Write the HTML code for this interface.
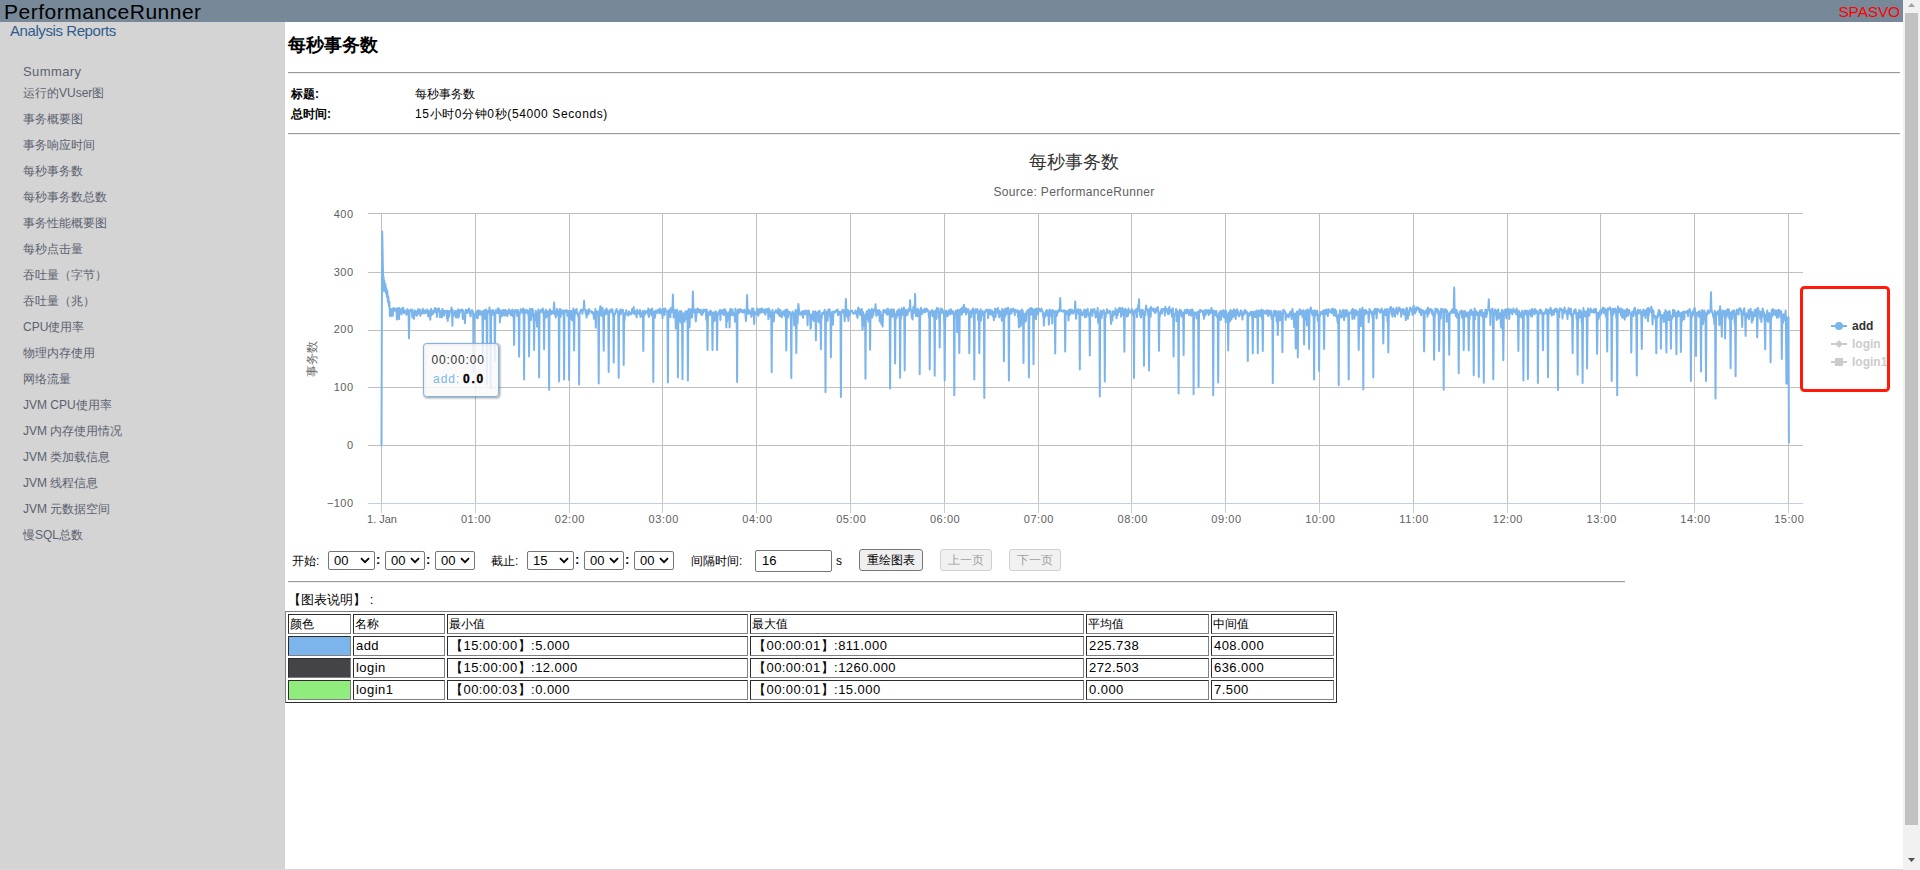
<!DOCTYPE html>
<html lang="zh">
<head>
<meta charset="utf-8">
<title>PerformanceRunner</title>
<style>
*{box-sizing:border-box;}
html,body{margin:0;padding:0;width:1920px;height:870px;overflow:hidden;background:#fff;}
body{font-family:"Liberation Sans",sans-serif;font-size:13px;color:#000;position:relative;}
.abs{position:absolute;white-space:nowrap;}
#hdr{left:0;top:0;width:1903px;height:22px;background:#778899;overflow:hidden;}
#brand{left:4px;top:-1px;font-size:21px;line-height:26px;color:#000;letter-spacing:.5px;}
#spasvo{right:3px;top:2px;font-size:15.4px;letter-spacing:-.1px;line-height:20px;color:#ff0000;}
#side{left:0;top:22px;width:285px;height:848px;background:#d4d4d4;}
#ar{left:10px;top:22px;font-size:15px;line-height:18px;color:#2f5d8c;letter-spacing:-.42px;}
.nav{left:23px;font-size:12px;line-height:16px;color:#5a6270;}
#sb{left:1903px;top:0;width:17px;height:870px;background:#f1f1f1;}
#sbthumb{left:2px;top:13px;width:13px;height:812px;background:#c1c1c1;}
.hr{height:2px;border-top:1px solid #9a9a9a;border-bottom:1px solid #eee;}
#h2{left:288px;top:33px;font-size:18px;line-height:24px;font-weight:bold;}
.lbl{font-size:12px;line-height:16px;font-weight:bold;}
.val{font-size:12px;line-height:16px;}
#chart{left:288px;top:135px;width:1612px;height:400px;}
.frm{font-size:12px;line-height:16px;top:553px;}
.sel{top:551px;height:19px;border:1px solid #767676;border-radius:2px;background:#fff;font-size:13px;line-height:17px;padding-left:5px;}
.col{font-size:13px;font-weight:bold;line-height:16px;top:552px;}
.sel svg{position:absolute;right:4px;top:5px;}
.btn{top:549px;height:22px;border:1px solid #767676;border-radius:3px;background:#efefef;font-size:12px;line-height:20px;text-align:center;}
.btn.dis{border-color:#d0d0d0;color:#a0a0a0;background:#f1f1f1;}
#tbl{left:285px;top:611px;border:1px solid;border-color:#808080 #2c2c2c #2c2c2c #808080;border-spacing:2px;border-collapse:separate;font-size:13px;table-layout:fixed;width:1052px;}
#tbl td{border:1px solid;border-color:#2c2c2c #808080 #808080 #2c2c2c;letter-spacing:.45px;height:20px;padding:0 0 0 2px;line-height:18px;white-space:nowrap;overflow:hidden;vertical-align:top;}
#tbl tr.th td{font-size:12px;letter-spacing:0;padding-left:1px;}
.cj{text-align:justify;text-align-last:justify;}
</style>
</head>
<body>
<div id="hdr" class="abs"><div id="brand" class="abs">PerformanceRunner</div><div id="spasvo" class="abs">SPASVO</div></div>
<div id="side" class="abs"></div>
<div id="ar" class="abs">Analysis Reports</div>
<div class="abs nav" style="top:64px;font-size:13px;letter-spacing:.4px">Summary</div>
<div class="abs cj nav" style="top:85px;width:81.37px">运行的VUser图</div>
<div class="abs cj nav" style="top:111px;width:60.02px">事务概要图</div>
<div class="abs cj nav" style="top:137px;width:72.02px">事务响应时间</div>
<div class="abs cj nav" style="top:163px;width:60.02px">每秒事务数</div>
<div class="abs cj nav" style="top:189px;width:84.02px">每秒事务数总数</div>
<div class="abs cj nav" style="top:215px;width:84.02px">事务性能概要图</div>
<div class="abs cj nav" style="top:241px;width:60.02px">每秒点击量</div>
<div class="abs cj nav" style="top:267px;width:84.02px">吞吐量（字节）</div>
<div class="abs cj nav" style="top:293px;width:72.02px">吞吐量（兆）</div>
<div class="abs cj nav" style="top:319px;width:61.37px">CPU使用率</div>
<div class="abs cj nav" style="top:345px;width:72.02px">物理内存使用</div>
<div class="abs cj nav" style="top:371px;width:48.02px">网络流量</div>
<div class="abs cj nav" style="top:397px;width:88.70px">JVM CPU使用率</div>
<div class="abs cj nav" style="top:423px;width:99.37px">JVM 内存使用情况</div>
<div class="abs cj nav" style="top:449px;width:87.37px">JVM 类加载信息</div>
<div class="abs cj nav" style="top:475px;width:75.37px">JVM 线程信息</div>
<div class="abs cj nav" style="top:501px;width:87.37px">JVM 元数据空间</div>
<div class="abs cj nav" style="top:527px;width:60.04px">慢SQL总数</div>

<div id="h2" class="abs cj" style="top:33px;width:90.02px">每秒事务数</div>
<div class="abs hr" style="left:288px;top:72px;width:1612px"></div>
<div class="abs cj lbl" style="left:291px;top:86px;width:28.02px">标题:</div>
<div class="abs cj val" style="left:415px;top:86px;width:60.02px">每秒事务数</div>
<div class="abs cj lbl" style="left:291px;top:106px;width:40.02px">总时间:</div>
<div class="abs cj val" style="left:415px;top:106px;letter-spacing:.62px;width:193.01px">15小时0分钟0秒(54000 Seconds)</div>
<div class="abs hr" style="left:288px;top:133px;width:1612px"></div>

<svg id="chart" class="abs" width="1612" height="400" viewBox="0 0 1612 400">
<rect x="0" y="0" width="1612" height="400" fill="#ffffff"/>
<path d="M93.5 78.0 V368.0" stroke="#c0c0c0" stroke-width="1" fill="none"/>
<path d="M93.5 368.0 V378.0" stroke="#c0d0e0" stroke-width="1" fill="none"/>
<path d="M187.5 78.0 V368.0" stroke="#c0c0c0" stroke-width="1" fill="none"/>
<path d="M187.5 368.0 V378.0" stroke="#c0d0e0" stroke-width="1" fill="none"/>
<path d="M281.5 78.0 V368.0" stroke="#c0c0c0" stroke-width="1" fill="none"/>
<path d="M281.5 368.0 V378.0" stroke="#c0d0e0" stroke-width="1" fill="none"/>
<path d="M374.5 78.0 V368.0" stroke="#c0c0c0" stroke-width="1" fill="none"/>
<path d="M374.5 368.0 V378.0" stroke="#c0d0e0" stroke-width="1" fill="none"/>
<path d="M468.5 78.0 V368.0" stroke="#c0c0c0" stroke-width="1" fill="none"/>
<path d="M468.5 368.0 V378.0" stroke="#c0d0e0" stroke-width="1" fill="none"/>
<path d="M562.5 78.0 V368.0" stroke="#c0c0c0" stroke-width="1" fill="none"/>
<path d="M562.5 368.0 V378.0" stroke="#c0d0e0" stroke-width="1" fill="none"/>
<path d="M656.5 78.0 V368.0" stroke="#c0c0c0" stroke-width="1" fill="none"/>
<path d="M656.5 368.0 V378.0" stroke="#c0d0e0" stroke-width="1" fill="none"/>
<path d="M750.5 78.0 V368.0" stroke="#c0c0c0" stroke-width="1" fill="none"/>
<path d="M750.5 368.0 V378.0" stroke="#c0d0e0" stroke-width="1" fill="none"/>
<path d="M843.5 78.0 V368.0" stroke="#c0c0c0" stroke-width="1" fill="none"/>
<path d="M843.5 368.0 V378.0" stroke="#c0d0e0" stroke-width="1" fill="none"/>
<path d="M937.5 78.0 V368.0" stroke="#c0c0c0" stroke-width="1" fill="none"/>
<path d="M937.5 368.0 V378.0" stroke="#c0d0e0" stroke-width="1" fill="none"/>
<path d="M1031.5 78.0 V368.0" stroke="#c0c0c0" stroke-width="1" fill="none"/>
<path d="M1031.5 368.0 V378.0" stroke="#c0d0e0" stroke-width="1" fill="none"/>
<path d="M1125.5 78.0 V368.0" stroke="#c0c0c0" stroke-width="1" fill="none"/>
<path d="M1125.5 368.0 V378.0" stroke="#c0d0e0" stroke-width="1" fill="none"/>
<path d="M1219.5 78.0 V368.0" stroke="#c0c0c0" stroke-width="1" fill="none"/>
<path d="M1219.5 368.0 V378.0" stroke="#c0d0e0" stroke-width="1" fill="none"/>
<path d="M1312.5 78.0 V368.0" stroke="#c0c0c0" stroke-width="1" fill="none"/>
<path d="M1312.5 368.0 V378.0" stroke="#c0d0e0" stroke-width="1" fill="none"/>
<path d="M1406.5 78.0 V368.0" stroke="#c0c0c0" stroke-width="1" fill="none"/>
<path d="M1406.5 368.0 V378.0" stroke="#c0d0e0" stroke-width="1" fill="none"/>
<path d="M1500.5 78.0 V368.0" stroke="#c0c0c0" stroke-width="1" fill="none"/>
<path d="M1500.5 368.0 V378.0" stroke="#c0d0e0" stroke-width="1" fill="none"/>
<path d="M80.0 78.5 H1515.0" stroke="#c0c0c0" stroke-width="1" fill="none"/>
<path d="M80.0 137.5 H1515.0" stroke="#c0c0c0" stroke-width="1" fill="none"/>
<path d="M80.0 195.5 H1515.0" stroke="#c0c0c0" stroke-width="1" fill="none"/>
<path d="M80.0 252.5 H1515.0" stroke="#c0c0c0" stroke-width="1" fill="none"/>
<path d="M80.0 310.5 H1515.0" stroke="#c0c0c0" stroke-width="1" fill="none"/>
<path d="M80.0 368.5 H1515.0" stroke="#c0d0e0" stroke-width="1" fill="none"/>
<text x="65.5" y="82.7" text-anchor="end" font-family="Liberation Sans, sans-serif" font-size="11" fill="#606060" letter-spacing="0.45">400</text>
<text x="65.5" y="140.5" text-anchor="end" font-family="Liberation Sans, sans-serif" font-size="11" fill="#606060" letter-spacing="0.45">300</text>
<text x="65.5" y="198.3" text-anchor="end" font-family="Liberation Sans, sans-serif" font-size="11" fill="#606060" letter-spacing="0.45">200</text>
<text x="65.5" y="256.1" text-anchor="end" font-family="Liberation Sans, sans-serif" font-size="11" fill="#606060" letter-spacing="0.45">100</text>
<text x="65.5" y="313.9" text-anchor="end" font-family="Liberation Sans, sans-serif" font-size="11" fill="#606060" letter-spacing="0.45">0</text>
<text x="65.5" y="371.7" text-anchor="end" font-family="Liberation Sans, sans-serif" font-size="11" fill="#606060" letter-spacing="0.45">−100</text>
<text x="94.0" y="388.0" text-anchor="middle" font-family="Liberation Sans, sans-serif" font-size="11" fill="#606060" letter-spacing="0">1. Jan</text>
<text x="188.1" y="388.0" text-anchor="middle" font-family="Liberation Sans, sans-serif" font-size="11" fill="#606060" letter-spacing="0.55">01:00</text>
<text x="281.9" y="388.0" text-anchor="middle" font-family="Liberation Sans, sans-serif" font-size="11" fill="#606060" letter-spacing="0.55">02:00</text>
<text x="375.7" y="388.0" text-anchor="middle" font-family="Liberation Sans, sans-serif" font-size="11" fill="#606060" letter-spacing="0.55">03:00</text>
<text x="469.5" y="388.0" text-anchor="middle" font-family="Liberation Sans, sans-serif" font-size="11" fill="#606060" letter-spacing="0.55">04:00</text>
<text x="563.3" y="388.0" text-anchor="middle" font-family="Liberation Sans, sans-serif" font-size="11" fill="#606060" letter-spacing="0.55">05:00</text>
<text x="657.1" y="388.0" text-anchor="middle" font-family="Liberation Sans, sans-serif" font-size="11" fill="#606060" letter-spacing="0.55">06:00</text>
<text x="750.9" y="388.0" text-anchor="middle" font-family="Liberation Sans, sans-serif" font-size="11" fill="#606060" letter-spacing="0.55">07:00</text>
<text x="844.7" y="388.0" text-anchor="middle" font-family="Liberation Sans, sans-serif" font-size="11" fill="#606060" letter-spacing="0.55">08:00</text>
<text x="938.5" y="388.0" text-anchor="middle" font-family="Liberation Sans, sans-serif" font-size="11" fill="#606060" letter-spacing="0.55">09:00</text>
<text x="1032.3" y="388.0" text-anchor="middle" font-family="Liberation Sans, sans-serif" font-size="11" fill="#606060" letter-spacing="0.55">10:00</text>
<text x="1126.1" y="388.0" text-anchor="middle" font-family="Liberation Sans, sans-serif" font-size="11" fill="#606060" letter-spacing="0.55">11:00</text>
<text x="1219.9" y="388.0" text-anchor="middle" font-family="Liberation Sans, sans-serif" font-size="11" fill="#606060" letter-spacing="0.55">12:00</text>
<text x="1313.7" y="388.0" text-anchor="middle" font-family="Liberation Sans, sans-serif" font-size="11" fill="#606060" letter-spacing="0.55">13:00</text>
<text x="1407.5" y="388.0" text-anchor="middle" font-family="Liberation Sans, sans-serif" font-size="11" fill="#606060" letter-spacing="0.55">14:00</text>
<text x="1501.3" y="388.0" text-anchor="middle" font-family="Liberation Sans, sans-serif" font-size="11" fill="#606060" letter-spacing="0.55">15:00</text>
<text x="28.0" y="223.5" text-anchor="middle" transform="rotate(-90 28.0 223.5)" font-family="Liberation Sans, sans-serif" font-size="12" fill="#707070" textLength="36" lengthAdjust="spacing">事务数</text>
<text x="786.0" y="32.5" text-anchor="middle" font-family="Liberation Sans, sans-serif" font-size="18" fill="#333333" textLength="90" lengthAdjust="spacing">每秒事务数</text>
<text x="786.0" y="60.5" text-anchor="middle" font-family="Liberation Sans, sans-serif" font-size="12" fill="#606060" letter-spacing="0.34">Source: PerformanceRunner</text>
<path d="M93.5 310.5 L93.9 165.0 L94.2 96.5 L94.8 127.0 L95.2 146.0 L95.6 142.0 L96.0 156.0 L96.4 146.0 L96.9 154.0 L97.4 149.0 L97.9 158.0 L98.4 153.0 L98.9 162.0 L99.4 156.0 L99.9 167.0 L100.4 162.0 L100.9 171.0 L101.4 167.0 L101.9 181.0 L102.4 174.0 L103.0 181.0 L103.5 179.5 L103.9 174.0 L104.3 175.4 L104.8 180.8 L105.2 173.4 L105.6 173.0 L106.0 176.0 L106.4 175.5 L106.8 174.4 L107.3 173.7 L107.7 174.3 L108.1 176.5 L108.5 173.7 L108.9 184.5 L109.3 173.3 L109.8 180.2 L110.2 177.2 L110.6 173.3 L111.0 184.1 L111.4 172.9 L111.8 174.5 L112.3 174.9 L112.7 178.5 L113.1 174.4 L113.5 179.4 L113.9 173.5 L114.3 177.0 L114.8 173.6 L115.2 172.8 L115.6 174.9 L116.0 178.4 L116.4 175.4 L116.8 175.5 L117.3 177.3 L117.7 176.3 L118.1 176.3 L118.5 179.8 L118.9 177.2 L119.3 174.2 L119.8 174.5 L120.2 177.9 L120.6 179.4 L121.0 203.3 L121.4 179.1 L121.8 176.0 L122.3 175.1 L122.7 174.9 L123.1 175.0 L123.5 176.1 L123.9 174.4 L124.3 182.4 L124.8 180.1 L125.2 179.0 L125.6 177.0 L126.0 183.8 L126.4 175.2 L126.9 179.3 L127.3 176.1 L127.7 176.2 L128.1 179.9 L128.5 180.6 L128.9 180.4 L129.4 178.0 L129.8 175.5 L130.2 174.2 L130.6 178.4 L131.0 176.5 L131.4 177.9 L131.9 174.5 L132.3 180.7 L132.7 178.9 L133.1 178.9 L133.5 176.5 L133.9 176.1 L134.4 176.4 L134.8 173.7 L135.2 178.6 L135.6 174.9 L136.0 177.5 L136.4 177.0 L136.9 178.4 L137.3 177.0 L137.7 175.3 L138.1 177.8 L138.5 176.8 L138.9 176.5 L139.4 174.4 L139.8 176.9 L140.2 181.5 L140.6 176.6 L141.0 177.6 L141.4 175.9 L141.9 177.5 L142.3 184.7 L142.7 177.4 L143.1 173.7 L143.5 180.2 L143.9 177.8 L144.4 179.1 L144.8 176.1 L145.2 178.7 L145.6 175.6 L146.0 177.4 L146.4 175.5 L146.9 172.9 L147.3 176.9 L147.7 174.6 L148.1 175.8 L148.5 174.0 L148.9 182.0 L149.4 175.0 L149.8 173.8 L150.2 176.3 L150.6 175.2 L151.0 173.4 L151.4 175.6 L151.9 182.3 L152.3 175.9 L152.7 177.5 L153.1 179.2 L153.5 177.9 L153.9 182.3 L154.4 173.9 L154.8 175.2 L155.2 175.2 L155.6 176.9 L156.0 180.7 L156.5 177.3 L156.9 175.7 L157.3 177.7 L157.7 176.8 L158.1 177.7 L158.5 175.9 L159.0 183.4 L159.4 175.8 L159.8 185.9 L160.2 178.6 L160.6 176.0 L161.0 181.8 L161.5 178.6 L161.9 177.4 L162.3 176.1 L162.7 176.2 L163.1 176.1 L163.5 172.4 L164.0 176.6 L164.4 190.7 L164.8 175.0 L165.2 181.1 L165.6 179.2 L166.0 179.2 L166.5 177.7 L166.9 179.6 L167.3 175.7 L167.7 182.2 L168.1 176.1 L168.5 176.8 L169.0 182.6 L169.4 182.2 L169.8 177.2 L170.2 174.3 L170.6 182.4 L171.0 179.8 L171.5 177.7 L171.9 177.5 L172.3 175.3 L172.7 174.8 L173.1 176.4 L173.5 175.5 L174.0 174.5 L174.4 177.3 L174.8 183.9 L175.2 175.5 L175.6 178.4 L176.0 179.8 L176.5 179.6 L176.9 188.3 L177.3 181.1 L177.7 175.2 L178.1 175.0 L178.5 176.6 L179.0 175.0 L179.4 178.1 L179.8 175.0 L180.2 174.7 L180.6 176.7 L181.0 173.5 L181.5 175.5 L181.9 177.3 L182.3 180.9 L182.7 181.4 L183.1 176.2 L183.5 176.6 L184.0 175.1 L184.4 176.8 L184.8 176.1 L185.2 180.4 L185.6 237.6 L186.0 182.8 L186.5 179.4 L186.9 180.4 L187.3 181.4 L187.7 177.7 L188.1 178.8 L188.6 176.8 L189.0 182.9 L189.4 175.4 L189.8 183.3 L190.2 176.4 L190.6 175.5 L191.1 179.4 L191.5 176.2 L191.9 175.9 L192.3 179.7 L192.7 177.4 L193.1 176.9 L193.6 176.5 L194.0 180.1 L194.4 181.3 L194.8 226.0 L195.2 181.9 L195.6 175.5 L196.1 179.9 L196.5 176.6 L196.9 175.3 L197.3 184.2 L197.7 180.8 L198.1 174.6 L198.6 182.1 L199.0 249.3 L199.4 178.3 L199.8 177.0 L200.2 175.8 L200.6 177.6 L201.1 177.1 L201.5 172.4 L201.9 179.3 L202.3 181.8 L202.7 253.6 L203.1 181.3 L203.6 175.5 L204.0 180.2 L204.4 175.4 L204.8 176.3 L205.2 175.1 L205.6 179.2 L206.1 178.0 L206.5 181.2 L206.9 226.0 L207.3 179.8 L207.7 175.3 L208.1 175.7 L208.6 175.8 L209.0 175.4 L209.4 178.0 L209.8 173.2 L210.2 174.9 L210.6 178.0 L211.1 178.6 L211.5 174.3 L211.9 187.4 L212.3 175.8 L212.7 177.9 L213.1 177.9 L213.6 181.4 L214.0 175.8 L214.4 175.4 L214.8 180.3 L215.2 175.7 L215.6 175.0 L216.1 174.9 L216.5 176.0 L216.9 180.6 L217.3 175.1 L217.7 179.6 L218.1 175.6 L218.6 177.1 L219.0 176.4 L219.4 181.2 L219.8 177.9 L220.2 177.1 L220.7 174.7 L221.1 174.4 L221.5 178.4 L221.9 175.7 L222.3 176.4 L222.7 179.4 L223.2 180.4 L223.6 178.8 L224.0 175.3 L224.4 174.6 L224.8 181.2 L225.2 175.6 L225.7 179.6 L226.1 210.1 L226.5 178.6 L226.9 175.9 L227.3 174.9 L227.7 176.1 L228.2 175.8 L228.6 176.3 L229.0 180.7 L229.4 174.9 L229.8 175.0 L230.2 178.7 L230.7 181.2 L231.1 221.8 L231.5 181.0 L231.9 178.3 L232.3 176.1 L232.7 174.2 L233.2 175.7 L233.6 174.6 L234.0 177.2 L234.4 177.0 L234.8 178.5 L235.2 173.4 L235.7 179.1 L236.1 244.6 L236.5 180.7 L236.9 174.7 L237.3 177.8 L237.7 177.1 L238.2 177.8 L238.6 177.6 L239.0 175.0 L239.4 175.6 L239.8 175.6 L240.2 179.3 L240.7 181.6 L241.1 221.5 L241.5 179.4 L241.9 173.8 L242.3 179.8 L242.7 181.1 L243.2 184.9 L243.6 176.5 L244.0 173.8 L244.4 178.5 L244.8 174.3 L245.2 181.5 L245.7 178.9 L246.1 215.0 L246.5 181.0 L246.9 183.1 L247.3 179.1 L247.7 175.8 L248.2 185.4 L248.6 181.2 L249.0 191.6 L249.4 177.3 L249.8 180.5 L250.3 174.6 L250.7 180.5 L251.1 242.4 L251.5 179.6 L251.9 176.8 L252.3 176.9 L252.8 175.0 L253.2 176.8 L253.6 176.7 L254.0 174.6 L254.4 175.8 L254.8 173.5 L255.3 178.9 L255.7 178.0 L256.1 214.2 L256.5 179.3 L256.9 176.8 L257.3 179.6 L257.8 174.4 L258.2 182.4 L258.6 181.3 L259.0 179.5 L259.4 177.1 L259.8 176.4 L260.3 176.1 L260.7 183.2 L261.1 254.8 L261.5 178.7 L261.9 174.2 L262.3 178.6 L262.8 177.0 L263.2 179.2 L263.6 175.9 L264.0 176.8 L264.4 177.7 L264.8 178.5 L265.3 178.0 L265.7 174.0 L266.1 167.5 L266.5 174.0 L266.9 179.6 L267.3 179.6 L267.8 182.4 L268.2 176.5 L268.6 180.2 L269.0 173.8 L269.4 178.0 L269.8 175.4 L270.3 176.8 L270.7 179.9 L271.1 246.4 L271.5 181.5 L271.9 173.9 L272.3 174.3 L272.8 181.7 L273.2 175.5 L273.6 176.5 L274.0 175.4 L274.4 176.0 L274.8 178.8 L275.3 175.6 L275.7 179.4 L276.1 244.6 L276.5 178.5 L276.9 175.4 L277.3 176.8 L277.8 176.4 L278.2 176.3 L278.6 174.9 L279.0 176.5 L279.4 180.8 L279.8 180.5 L280.3 175.9 L280.7 180.7 L281.1 244.9 L281.5 180.7 L281.9 177.8 L282.4 176.0 L282.8 177.5 L283.2 176.0 L283.6 184.8 L284.0 178.0 L284.4 177.7 L284.9 185.8 L285.3 173.4 L285.7 180.4 L286.1 215.4 L286.5 181.6 L286.9 179.2 L287.4 175.1 L287.8 178.7 L288.2 177.2 L288.6 174.0 L289.0 178.6 L289.4 177.7 L289.9 179.1 L290.3 181.7 L290.7 179.8 L291.1 249.6 L291.5 180.0 L291.9 177.4 L292.4 176.4 L292.8 174.7 L293.2 174.8 L293.6 176.3 L294.0 175.4 L294.4 178.8 L294.9 174.4 L295.3 175.1 L295.7 174.0 L296.1 165.8 L296.5 174.0 L296.9 174.2 L297.4 175.7 L297.8 178.9 L298.2 176.9 L298.6 182.6 L299.0 175.3 L299.4 180.1 L299.9 176.5 L300.3 178.1 L300.7 178.9 L301.1 173.9 L301.5 176.2 L301.9 176.2 L302.4 176.4 L302.8 176.3 L303.2 177.0 L303.6 176.3 L304.0 177.8 L304.4 178.5 L304.9 177.3 L305.3 177.4 L305.7 180.6 L306.1 183.8 L306.5 178.7 L306.9 179.0 L307.4 174.1 L307.8 192.8 L308.2 178.0 L308.6 176.5 L309.0 177.8 L309.4 176.6 L309.9 178.3 L310.3 179.8 L310.7 248.5 L311.1 181.4 L311.5 176.0 L311.9 173.6 L312.4 171.2 L312.8 174.1 L313.2 180.8 L313.6 173.8 L314.0 180.3 L314.5 172.7 L314.9 180.2 L315.3 183.3 L315.7 215.7 L316.1 179.0 L316.5 178.1 L317.0 175.0 L317.4 177.6 L317.8 179.6 L318.2 177.9 L318.6 173.5 L319.0 178.6 L319.5 175.3 L319.9 176.6 L320.3 179.5 L320.7 236.9 L321.1 181.3 L321.5 176.8 L322.0 175.1 L322.4 175.6 L322.8 176.6 L323.2 176.9 L323.6 174.3 L324.0 175.3 L324.5 174.6 L324.9 179.6 L325.3 181.0 L325.7 227.4 L326.1 178.7 L326.5 179.5 L327.0 179.4 L327.4 177.5 L327.8 175.5 L328.2 176.6 L328.6 173.9 L329.0 176.3 L329.5 175.8 L329.9 177.9 L330.3 181.3 L330.7 242.7 L331.1 181.9 L331.5 177.4 L332.0 175.6 L332.4 174.6 L332.8 179.2 L333.2 174.8 L333.6 176.5 L334.0 176.0 L334.5 177.3 L334.9 174.7 L335.3 179.3 L335.7 230.0 L336.1 181.2 L336.5 185.4 L337.0 179.1 L337.4 177.6 L337.8 178.3 L338.2 175.3 L338.6 178.8 L339.0 179.6 L339.5 179.3 L339.9 179.3 L340.3 180.6 L340.7 176.3 L341.1 178.5 L341.5 177.4 L342.0 179.3 L342.4 178.9 L342.8 177.7 L343.2 179.4 L343.6 176.7 L344.1 174.1 L344.5 178.1 L344.9 177.6 L345.3 176.3 L345.7 172.0 L346.1 178.8 L346.6 178.9 L347.0 175.9 L347.4 179.3 L347.8 178.0 L348.2 175.9 L348.6 182.5 L349.1 174.7 L349.5 177.4 L349.9 176.1 L350.3 177.7 L350.7 178.7 L351.1 177.3 L351.6 177.6 L352.0 175.0 L352.4 182.0 L352.8 178.5 L353.2 178.4 L353.6 181.3 L354.1 179.7 L354.5 176.0 L354.9 180.8 L355.3 216.1 L355.7 180.5 L356.1 176.1 L356.6 175.7 L357.0 179.6 L357.4 178.1 L357.8 176.8 L358.2 176.7 L358.6 176.1 L359.1 177.3 L359.5 177.7 L359.9 178.9 L360.3 173.4 L360.7 181.1 L361.1 182.0 L361.6 174.8 L362.0 174.8 L362.4 175.0 L362.8 178.3 L363.2 178.4 L363.6 180.2 L364.1 173.4 L364.5 176.6 L364.9 182.0 L365.3 247.1 L365.7 178.0 L366.1 176.4 L366.6 176.4 L367.0 182.8 L367.4 177.4 L367.8 175.6 L368.2 178.2 L368.6 178.2 L369.1 176.0 L369.5 175.2 L369.9 177.3 L370.3 174.6 L370.7 175.6 L371.1 177.0 L371.6 178.4 L372.0 173.6 L372.4 174.4 L372.8 177.2 L373.2 175.0 L373.6 178.2 L374.1 175.4 L374.5 183.2 L374.9 175.0 L375.3 173.8 L375.7 175.4 L376.2 177.1 L376.6 179.9 L377.0 173.4 L377.4 173.8 L377.8 176.3 L378.2 176.3 L378.7 176.1 L379.1 176.8 L379.5 183.3 L379.9 247.5 L380.3 179.3 L380.7 175.3 L381.2 176.6 L381.6 174.8 L382.0 177.0 L382.4 182.2 L382.8 172.9 L383.2 175.6 L383.7 175.5 L384.1 177.0 L384.5 174.0 L384.9 159.5 L385.3 174.0 L385.7 182.4 L386.2 177.2 L386.6 178.3 L387.0 174.9 L387.4 175.4 L387.8 193.4 L388.2 176.2 L388.7 179.6 L389.1 174.8 L389.5 181.3 L389.9 242.3 L390.3 181.4 L390.7 180.4 L391.2 178.7 L391.6 176.2 L392.0 184.6 L392.4 187.4 L392.8 183.0 L393.2 175.9 L393.7 179.4 L394.1 192.0 L394.5 244.2 L394.9 181.0 L395.3 178.2 L395.7 179.9 L396.2 180.4 L396.6 186.8 L397.0 181.6 L397.4 176.4 L397.8 178.8 L398.2 182.6 L398.7 184.6 L399.1 176.0 L399.5 180.9 L399.9 245.6 L400.3 181.3 L400.7 174.0 L401.2 178.0 L401.6 192.2 L402.0 174.6 L402.4 174.7 L402.8 182.7 L403.2 176.0 L403.7 173.9 L404.1 182.4 L404.5 174.0 L404.9 156.6 L405.3 174.0 L405.7 175.8 L406.2 177.5 L406.6 177.3 L407.0 174.5 L407.4 181.8 L407.8 186.5 L408.3 181.7 L408.7 174.6 L409.1 175.5 L409.5 173.4 L409.9 173.8 L410.3 177.4 L410.8 174.7 L411.2 175.1 L411.6 175.9 L412.0 177.5 L412.4 174.7 L412.8 174.8 L413.3 179.6 L413.7 176.0 L414.1 179.9 L414.5 178.2 L414.9 178.5 L415.3 174.5 L415.8 175.7 L416.2 176.1 L416.6 176.3 L417.0 174.8 L417.4 176.7 L417.8 177.0 L418.3 184.8 L418.7 174.4 L419.1 181.5 L419.5 215.0 L419.9 183.3 L420.3 177.5 L420.8 178.3 L421.2 176.9 L421.6 179.6 L422.0 180.0 L422.4 175.5 L422.8 178.4 L423.3 176.5 L423.7 177.4 L424.1 181.7 L424.5 215.0 L424.9 181.4 L425.3 179.7 L425.8 177.2 L426.2 180.6 L426.6 185.9 L427.0 182.9 L427.4 180.7 L427.8 176.2 L428.3 180.0 L428.7 178.7 L429.1 215.0 L429.5 181.5 L429.9 179.4 L430.3 177.7 L430.8 176.7 L431.2 178.4 L431.6 176.3 L432.0 174.7 L432.4 185.0 L432.8 175.8 L433.3 176.8 L433.7 176.6 L434.1 175.4 L434.5 178.7 L434.9 179.0 L435.3 174.8 L435.8 179.8 L436.2 180.1 L436.6 175.3 L437.0 174.2 L437.4 177.7 L437.9 175.9 L438.3 192.5 L438.7 180.2 L439.1 186.5 L439.5 181.8 L439.9 178.6 L440.4 177.4 L440.8 181.2 L441.2 177.7 L441.6 192.6 L442.0 175.9 L442.4 174.0 L442.9 175.6 L443.3 180.2 L443.7 174.5 L444.1 175.9 L444.5 174.8 L444.9 178.5 L445.4 180.1 L445.8 178.3 L446.2 179.7 L446.6 178.4 L447.0 186.8 L447.4 173.8 L447.9 178.3 L448.3 184.4 L448.7 182.2 L449.1 247.1 L449.5 178.3 L449.9 174.5 L450.4 178.3 L450.8 178.0 L451.2 177.6 L451.6 175.3 L452.0 174.0 L452.4 176.0 L452.9 176.7 L453.3 174.9 L453.7 174.8 L454.1 176.5 L454.5 177.1 L454.9 176.6 L455.4 177.5 L455.8 176.5 L456.2 174.8 L456.6 176.7 L457.0 175.5 L457.4 178.6 L457.9 186.0 L458.3 181.5 L458.7 173.0 L459.1 159.9 L459.5 174.0 L459.9 174.4 L460.4 178.7 L460.8 175.3 L461.2 177.2 L461.6 175.5 L462.0 178.7 L462.4 178.2 L462.9 177.4 L463.3 181.8 L463.7 180.0 L464.1 173.6 L464.5 176.8 L464.9 174.7 L465.4 173.6 L465.8 181.2 L466.2 189.0 L466.6 179.7 L467.0 177.1 L467.4 178.2 L467.9 178.0 L468.3 179.2 L468.7 179.4 L469.1 174.7 L469.5 173.6 L470.0 176.4 L470.4 180.8 L470.8 175.1 L471.2 178.1 L471.6 174.3 L472.0 178.0 L472.5 174.0 L472.9 174.0 L473.3 177.4 L473.7 176.8 L474.1 173.5 L474.5 176.4 L475.0 174.7 L475.4 177.3 L475.8 175.6 L476.2 175.3 L476.6 178.5 L477.0 174.2 L477.5 179.8 L477.9 174.4 L478.3 176.6 L478.7 177.0 L479.1 174.4 L479.5 174.0 L480.0 174.8 L480.4 184.1 L480.8 173.6 L481.2 181.6 L481.6 175.4 L482.0 175.9 L482.5 178.4 L482.9 179.3 L483.3 185.4 L483.7 237.3 L484.1 178.1 L484.5 174.8 L485.0 179.8 L485.4 180.6 L485.8 186.5 L486.2 179.4 L486.6 177.3 L487.0 176.7 L487.5 176.7 L487.9 175.3 L488.3 177.1 L488.7 177.5 L489.1 176.1 L489.5 178.5 L490.0 175.2 L490.4 173.6 L490.8 177.7 L491.2 180.4 L491.6 176.8 L492.0 181.1 L492.5 174.9 L492.9 180.5 L493.3 177.5 L493.7 182.2 L494.1 180.5 L494.5 177.9 L495.0 177.1 L495.4 176.2 L495.8 176.5 L496.2 179.9 L496.6 176.0 L497.0 181.3 L497.5 174.8 L497.9 181.7 L498.3 215.4 L498.7 179.1 L499.1 174.4 L499.5 181.0 L500.0 182.5 L500.4 176.4 L500.8 177.4 L501.2 179.3 L501.6 178.7 L502.1 177.1 L502.5 179.7 L502.9 184.4 L503.3 243.0 L503.7 179.9 L504.1 179.2 L504.6 176.6 L505.0 178.4 L505.4 178.0 L505.8 180.0 L506.2 190.5 L506.6 182.8 L507.1 181.1 L507.5 174.9 L507.9 179.9 L508.3 217.9 L508.7 180.0 L509.1 175.2 L509.6 188.5 L510.0 174.0 L510.4 169.0 L510.8 174.0 L511.2 176.9 L511.6 179.4 L512.1 177.4 L512.5 178.0 L512.9 179.8 L513.3 177.4 L513.7 178.5 L514.1 176.2 L514.6 178.1 L515.0 182.7 L515.4 177.4 L515.8 177.0 L516.2 175.9 L516.6 178.7 L517.1 179.4 L517.5 175.5 L517.9 175.6 L518.3 177.5 L518.7 176.6 L519.1 177.1 L519.6 190.2 L520.0 175.6 L520.4 179.4 L520.8 175.8 L521.2 177.5 L521.6 179.1 L522.1 180.9 L522.5 193.8 L522.9 192.6 L523.3 182.7 L523.7 179.6 L524.1 179.4 L524.6 184.0 L525.0 176.4 L525.4 182.2 L525.8 185.9 L526.2 178.6 L526.6 179.0 L527.1 176.3 L527.5 181.5 L527.9 205.2 L528.3 179.3 L528.7 182.3 L529.1 177.5 L529.6 180.4 L530.0 176.5 L530.4 186.8 L530.8 178.6 L531.2 182.1 L531.7 175.8 L532.1 188.4 L532.5 181.1 L532.9 214.2 L533.3 181.6 L533.7 183.1 L534.2 177.7 L534.6 178.0 L535.0 179.1 L535.4 179.0 L535.8 177.4 L536.2 176.3 L536.7 174.8 L537.1 181.0 L537.5 257.3 L537.9 180.9 L538.3 179.5 L538.7 176.7 L539.2 177.5 L539.6 185.7 L540.0 176.7 L540.4 174.4 L540.8 176.2 L541.2 177.4 L541.7 174.5 L542.1 182.5 L542.5 181.2 L542.9 222.3 L543.3 179.7 L543.7 178.2 L544.2 176.7 L544.6 178.3 L545.0 189.7 L545.4 177.3 L545.8 176.6 L546.2 177.5 L546.7 176.6 L547.1 177.5 L547.5 176.1 L547.9 176.4 L548.3 175.8 L548.7 175.0 L549.2 175.8 L549.6 174.5 L550.0 180.3 L550.4 178.6 L550.8 177.8 L551.2 176.7 L551.7 179.3 L552.1 177.0 L552.5 179.4 L552.9 262.1 L553.3 180.1 L553.7 176.7 L554.2 175.7 L554.6 174.7 L555.0 177.6 L555.4 175.3 L555.8 176.6 L556.2 178.7 L556.7 186.3 L557.1 178.0 L557.5 174.0 L557.9 163.9 L558.3 174.0 L558.7 180.7 L559.2 178.0 L559.6 182.5 L560.0 175.0 L560.4 186.0 L560.8 176.4 L561.2 176.4 L561.7 180.4 L562.1 177.7 L562.5 175.7 L562.9 175.6 L563.3 176.6 L563.8 176.8 L564.2 175.7 L564.6 176.9 L565.0 178.1 L565.4 178.8 L565.8 177.9 L566.3 177.8 L566.7 178.2 L567.1 178.5 L567.5 175.5 L567.9 176.7 L568.3 176.3 L568.8 180.8 L569.2 178.4 L569.6 182.9 L570.0 174.3 L570.4 172.5 L570.8 174.8 L571.3 176.8 L571.7 174.6 L572.1 180.0 L572.5 176.2 L572.9 177.7 L573.3 178.7 L573.8 174.0 L574.2 188.2 L574.6 194.8 L575.0 176.9 L575.4 178.2 L575.8 190.8 L576.3 181.4 L576.7 180.8 L577.1 181.6 L577.5 243.7 L577.9 178.8 L578.3 184.2 L578.8 176.2 L579.2 176.2 L579.6 178.1 L580.0 178.1 L580.4 186.6 L580.8 174.4 L581.3 175.9 L581.7 180.8 L582.1 214.7 L582.5 179.9 L582.9 175.8 L583.3 174.6 L583.8 173.9 L584.2 182.6 L584.6 174.2 L585.0 175.4 L585.4 180.0 L585.8 174.9 L586.3 175.9 L586.7 174.9 L587.1 174.0 L587.5 169.3 L587.9 174.0 L588.3 181.0 L588.8 179.7 L589.2 179.6 L589.6 175.6 L590.0 177.2 L590.4 175.3 L590.8 179.7 L591.3 175.2 L591.7 186.5 L592.1 177.4 L592.5 176.7 L592.9 180.4 L593.3 188.9 L593.8 180.0 L594.2 181.7 L594.6 191.6 L595.0 179.7 L595.4 175.0 L595.9 177.7 L596.3 175.8 L596.7 175.1 L597.1 176.0 L597.5 176.6 L597.9 177.7 L598.4 176.1 L598.8 179.7 L599.2 173.8 L599.6 176.3 L600.0 179.2 L600.4 174.1 L600.9 179.0 L601.3 175.6 L601.7 179.8 L602.1 253.4 L602.5 184.4 L602.9 174.6 L603.4 174.5 L603.8 174.5 L604.2 176.9 L604.6 181.9 L605.0 179.8 L605.4 174.7 L605.9 174.5 L606.3 178.5 L606.7 178.8 L607.1 228.5 L607.5 179.3 L607.9 179.1 L608.4 183.2 L608.8 177.5 L609.2 176.0 L609.6 176.9 L610.0 180.5 L610.4 174.8 L610.9 177.8 L611.3 174.2 L611.7 178.9 L612.1 242.7 L612.5 180.5 L612.9 183.5 L613.4 176.3 L613.8 173.6 L614.2 175.5 L614.6 174.0 L615.0 179.9 L615.4 177.0 L615.9 172.6 L616.3 180.3 L616.7 235.4 L617.1 180.9 L617.5 176.5 L617.9 174.7 L618.4 176.0 L618.8 180.3 L619.2 176.4 L619.6 179.3 L620.0 177.4 L620.4 174.0 L620.9 176.6 L621.3 175.0 L621.7 174.0 L622.1 165.3 L622.5 174.0 L622.9 174.8 L623.4 176.1 L623.8 182.8 L624.2 176.1 L624.6 184.4 L625.0 175.2 L625.5 171.7 L625.9 177.9 L626.3 177.8 L626.7 174.0 L627.1 158.8 L627.5 174.0 L628.0 181.0 L628.4 178.7 L628.8 177.3 L629.2 174.3 L629.6 181.0 L630.0 174.0 L630.5 174.8 L630.9 177.2 L631.3 181.0 L631.7 239.3 L632.1 181.9 L632.5 175.8 L633.0 172.8 L633.4 176.6 L633.8 179.3 L634.2 177.2 L634.6 177.2 L635.0 175.1 L635.5 176.7 L635.9 175.1 L636.3 177.6 L636.7 173.8 L637.1 175.0 L637.5 174.1 L638.0 176.8 L638.4 173.4 L638.8 175.5 L639.2 174.4 L639.6 176.1 L640.0 175.9 L640.5 175.5 L640.9 182.2 L641.3 180.1 L641.7 234.4 L642.1 180.5 L642.5 177.5 L643.0 176.0 L643.4 176.0 L643.8 175.2 L644.2 175.1 L644.6 181.2 L645.0 180.7 L645.5 178.3 L645.9 176.3 L646.3 180.4 L646.7 240.8 L647.1 179.9 L647.5 175.4 L648.0 176.0 L648.4 183.9 L648.8 172.9 L649.2 175.8 L649.6 176.7 L650.0 175.2 L650.5 173.6 L650.9 182.7 L651.3 179.4 L651.7 212.5 L652.1 179.9 L652.5 178.7 L653.0 173.6 L653.4 173.9 L653.8 177.8 L654.2 175.5 L654.6 174.6 L655.0 177.8 L655.5 178.2 L655.9 177.0 L656.3 189.9 L656.7 245.6 L657.1 186.5 L657.6 180.8 L658.0 175.5 L658.4 177.3 L658.8 176.6 L659.2 177.1 L659.6 181.3 L660.1 179.8 L660.5 176.8 L660.9 175.3 L661.3 175.1 L661.7 176.4 L662.1 179.4 L662.6 177.4 L663.0 174.2 L663.4 175.9 L663.8 178.6 L664.2 177.3 L664.6 176.3 L665.1 176.7 L665.5 179.3 L665.9 180.4 L666.3 260.2 L666.7 180.2 L667.1 179.5 L667.6 175.8 L668.0 176.2 L668.4 176.2 L668.8 178.9 L669.2 197.2 L669.6 174.7 L670.1 177.3 L670.5 175.2 L670.9 180.7 L671.3 217.9 L671.7 181.9 L672.1 174.9 L672.6 174.0 L673.0 177.9 L673.4 176.5 L673.8 179.7 L674.2 172.6 L674.6 176.6 L675.1 177.2 L675.5 174.0 L675.9 169.7 L676.3 174.0 L676.7 176.9 L677.1 172.9 L677.6 175.4 L678.0 179.4 L678.4 173.8 L678.8 177.7 L679.2 176.2 L679.6 176.1 L680.1 174.1 L680.5 174.5 L680.9 180.3 L681.3 218.3 L681.7 182.0 L682.1 177.3 L682.6 181.2 L683.0 175.6 L683.4 182.0 L683.8 178.1 L684.2 175.9 L684.6 175.1 L685.1 173.5 L685.5 177.0 L685.9 179.3 L686.3 244.6 L686.7 180.4 L687.1 175.8 L687.6 174.3 L688.0 177.9 L688.4 175.5 L688.8 174.6 L689.2 174.0 L689.7 175.3 L690.1 185.0 L690.5 176.4 L690.9 180.3 L691.3 218.3 L691.7 179.8 L692.2 175.1 L692.6 174.4 L693.0 185.4 L693.4 177.2 L693.8 178.9 L694.2 180.4 L694.7 175.9 L695.1 179.0 L695.5 178.3 L695.9 182.7 L696.3 263.1 L696.7 178.9 L697.2 175.9 L697.6 175.4 L698.0 176.6 L698.4 174.4 L698.8 174.5 L699.2 175.6 L699.7 176.0 L700.1 183.2 L700.5 180.2 L700.9 174.8 L701.3 177.9 L701.7 174.7 L702.2 178.9 L702.6 179.4 L703.0 175.7 L703.4 177.0 L703.8 175.2 L704.2 177.7 L704.7 181.0 L705.1 177.0 L705.5 179.6 L705.9 185.3 L706.3 177.4 L706.7 175.9 L707.2 173.4 L707.6 181.9 L708.0 174.3 L708.4 175.7 L708.8 177.8 L709.2 175.1 L709.7 173.8 L710.1 173.1 L710.5 178.5 L710.9 181.2 L711.3 182.3 L711.7 176.1 L712.2 177.9 L712.6 180.2 L713.0 177.1 L713.4 178.4 L713.8 185.6 L714.2 173.9 L714.7 174.5 L715.1 175.2 L715.5 181.9 L715.9 226.2 L716.3 178.3 L716.7 182.3 L717.2 173.7 L717.6 180.5 L718.0 175.1 L718.4 174.4 L718.8 173.5 L719.3 178.5 L719.7 173.1 L720.1 172.7 L720.5 181.2 L720.9 245.6 L721.3 179.9 L721.8 176.7 L722.2 179.0 L722.6 173.9 L723.0 177.3 L723.4 178.6 L723.8 176.8 L724.3 174.5 L724.7 176.0 L725.1 173.6 L725.5 174.7 L725.9 175.5 L726.3 176.5 L726.8 180.2 L727.2 174.7 L727.6 176.8 L728.0 177.0 L728.4 175.9 L728.8 176.7 L729.3 175.2 L729.7 175.4 L730.1 182.3 L730.5 179.4 L730.9 192.6 L731.3 179.2 L731.8 176.0 L732.2 178.5 L732.6 191.3 L733.0 179.7 L733.4 188.9 L733.8 174.4 L734.3 188.2 L734.7 175.5 L735.1 181.8 L735.5 228.1 L735.9 179.3 L736.3 187.4 L736.8 185.2 L737.2 178.7 L737.6 186.4 L738.0 185.6 L738.4 176.9 L738.8 176.6 L739.3 177.1 L739.7 177.1 L740.1 174.7 L740.5 180.3 L740.9 242.4 L741.3 187.0 L741.8 175.5 L742.2 173.3 L742.6 178.7 L743.0 178.3 L743.4 179.6 L743.8 173.1 L744.3 175.4 L744.7 174.6 L745.1 180.6 L745.5 229.3 L745.9 180.2 L746.3 174.6 L746.8 178.9 L747.2 178.7 L747.6 174.0 L748.0 184.1 L748.4 173.8 L748.8 176.5 L749.3 175.3 L749.7 173.4 L750.1 179.4 L750.5 174.8 L750.9 174.5 L751.4 173.9 L751.8 174.6 L752.2 174.9 L752.6 176.5 L753.0 175.6 L753.4 173.6 L753.9 175.2 L754.3 176.5 L754.7 176.1 L755.1 181.7 L755.5 180.1 L755.9 190.6 L756.4 178.4 L756.8 182.3 L757.2 177.8 L757.6 177.9 L758.0 176.3 L758.4 175.2 L758.9 180.4 L759.3 178.7 L759.7 175.6 L760.1 180.1 L760.5 180.1 L760.9 189.6 L761.4 180.4 L761.8 174.6 L762.2 175.2 L762.6 180.8 L763.0 176.4 L763.4 177.5 L763.9 175.5 L764.3 188.4 L764.7 174.9 L765.1 177.3 L765.5 175.9 L765.9 175.9 L766.4 176.7 L766.8 178.1 L767.2 218.6 L767.6 180.6 L768.0 176.1 L768.4 176.9 L768.9 181.0 L769.3 177.4 L769.7 177.2 L770.1 175.4 L770.5 177.1 L770.9 174.8 L771.4 176.0 L771.8 174.0 L772.2 163.1 L772.6 174.0 L773.0 175.6 L773.4 176.2 L773.9 176.5 L774.3 176.3 L774.7 175.7 L775.1 176.5 L775.5 175.4 L775.9 175.5 L776.4 175.2 L776.8 178.0 L777.2 216.4 L777.6 180.1 L778.0 175.9 L778.4 177.5 L778.9 176.5 L779.3 179.2 L779.7 176.3 L780.1 178.3 L780.5 185.4 L780.9 175.0 L781.4 179.8 L781.8 175.0 L782.2 179.6 L782.6 174.5 L783.0 178.4 L783.5 175.9 L783.9 174.8 L784.3 178.0 L784.7 175.8 L785.1 178.6 L785.5 178.1 L786.0 175.9 L786.4 176.8 L786.8 174.0 L787.2 166.4 L787.6 174.0 L788.0 183.8 L788.5 177.7 L788.9 176.7 L789.3 175.1 L789.7 178.2 L790.1 175.7 L790.5 174.2 L791.0 179.4 L791.4 179.1 L791.8 234.4 L792.2 181.0 L792.6 174.8 L793.0 177.2 L793.5 177.2 L793.9 178.3 L794.3 180.4 L794.7 177.6 L795.1 177.4 L795.5 178.8 L796.0 175.5 L796.4 174.6 L796.8 182.2 L797.2 177.9 L797.6 181.0 L798.0 175.2 L798.5 181.8 L798.9 176.4 L799.3 175.2 L799.7 173.8 L800.1 179.2 L800.5 177.3 L801.0 181.4 L801.4 179.3 L801.8 220.4 L802.2 178.2 L802.6 179.2 L803.0 174.4 L803.5 179.2 L803.9 174.5 L804.3 180.8 L804.7 177.0 L805.1 176.9 L805.5 175.3 L806.0 174.1 L806.4 174.0 L806.8 177.7 L807.2 178.2 L807.6 182.4 L808.0 179.1 L808.5 176.6 L808.9 181.8 L809.3 179.7 L809.7 173.1 L810.1 187.8 L810.5 178.7 L811.0 181.3 L811.4 178.6 L811.8 261.4 L812.2 181.2 L812.6 175.4 L813.1 181.5 L813.5 183.1 L813.9 180.6 L814.3 176.5 L814.7 177.1 L815.1 176.7 L815.6 175.0 L816.0 176.6 L816.4 180.6 L816.8 246.4 L817.2 180.8 L817.6 182.5 L818.1 177.8 L818.5 178.1 L818.9 174.3 L819.3 175.2 L819.7 178.0 L820.1 175.9 L820.6 177.8 L821.0 177.1 L821.4 177.3 L821.8 175.9 L822.2 176.0 L822.6 181.3 L823.1 189.0 L823.5 181.8 L823.9 180.1 L824.3 185.6 L824.7 176.2 L825.1 177.8 L825.6 180.7 L826.0 176.4 L826.4 178.7 L826.8 177.7 L827.2 179.0 L827.6 173.5 L828.1 177.7 L828.5 183.2 L828.9 175.9 L829.3 177.1 L829.7 180.2 L830.1 174.6 L830.6 177.1 L831.0 173.5 L831.4 176.7 L831.8 172.7 L832.2 176.3 L832.6 174.6 L833.1 181.8 L833.5 173.4 L833.9 179.9 L834.3 173.1 L834.7 174.6 L835.1 179.5 L835.6 175.0 L836.0 180.2 L836.4 216.7 L836.8 178.2 L837.2 173.7 L837.6 177.5 L838.1 178.7 L838.5 174.9 L838.9 181.6 L839.3 181.3 L839.7 176.1 L840.1 180.6 L840.6 173.6 L841.0 176.8 L841.4 176.5 L841.8 177.2 L842.2 176.3 L842.6 177.9 L843.1 175.7 L843.5 175.5 L843.9 174.1 L844.3 175.3 L844.7 175.5 L845.2 181.0 L845.6 180.7 L846.0 243.1 L846.4 179.4 L846.8 175.9 L847.2 175.2 L847.7 177.3 L848.1 175.1 L848.5 173.7 L848.9 182.1 L849.3 177.0 L849.7 176.1 L850.2 170.1 L850.6 174.0 L851.0 164.3 L851.4 174.0 L851.8 176.1 L852.2 181.0 L852.7 176.3 L853.1 182.6 L853.5 175.0 L853.9 178.6 L854.3 175.6 L854.7 174.9 L855.2 179.3 L855.6 180.4 L856.0 230.7 L856.4 178.7 L856.8 176.6 L857.2 180.3 L857.7 173.9 L858.1 170.5 L858.5 174.0 L858.9 173.9 L859.3 175.4 L859.7 174.4 L860.2 180.4 L860.6 179.6 L861.0 235.4 L861.4 179.0 L861.8 173.9 L862.2 173.3 L862.7 181.8 L863.1 171.9 L863.5 173.9 L863.9 173.8 L864.3 174.7 L864.7 174.0 L865.2 175.9 L865.6 173.4 L866.0 176.1 L866.4 174.7 L866.8 177.8 L867.2 174.6 L867.7 177.7 L868.1 173.9 L868.5 173.2 L868.9 175.8 L869.3 175.9 L869.7 172.1 L870.2 175.0 L870.6 180.7 L871.0 215.7 L871.4 181.8 L871.8 181.7 L872.2 177.2 L872.7 177.7 L873.1 176.1 L873.5 174.1 L873.9 178.7 L874.3 176.0 L874.7 174.5 L875.2 174.0 L875.6 174.3 L876.0 174.6 L876.4 173.7 L876.8 180.5 L877.3 171.8 L877.7 176.7 L878.1 174.6 L878.5 174.0 L878.9 175.9 L879.3 174.8 L879.8 178.5 L880.2 179.2 L880.6 173.5 L881.0 179.0 L881.4 171.8 L881.8 174.3 L882.3 176.8 L882.7 175.6 L883.1 175.5 L883.5 174.9 L883.9 181.5 L884.3 176.9 L884.8 173.2 L885.2 179.5 L885.6 221.5 L886.0 180.0 L886.4 179.5 L886.8 179.3 L887.3 179.5 L887.7 177.6 L888.1 173.9 L888.5 186.2 L888.9 175.9 L889.3 175.9 L889.8 179.5 L890.2 180.5 L890.6 258.5 L891.0 181.1 L891.4 177.4 L891.8 174.7 L892.3 179.5 L892.7 175.2 L893.1 175.6 L893.5 181.6 L893.9 178.0 L894.3 177.5 L894.8 177.8 L895.2 179.4 L895.6 220.1 L896.0 179.1 L896.4 177.0 L896.8 175.0 L897.3 176.5 L897.7 176.0 L898.1 178.6 L898.5 177.8 L898.9 174.6 L899.3 176.9 L899.8 174.8 L900.2 178.1 L900.6 175.6 L901.0 180.1 L901.4 178.6 L901.8 178.7 L902.3 175.9 L902.7 174.7 L903.1 180.7 L903.5 177.5 L903.9 177.3 L904.3 174.6 L904.8 175.8 L905.2 180.6 L905.6 259.2 L906.0 179.2 L906.4 177.4 L906.9 177.9 L907.3 179.2 L907.7 177.5 L908.1 177.8 L908.5 183.3 L908.9 177.6 L909.4 177.7 L909.8 176.8 L910.2 181.2 L910.6 252.2 L911.0 180.5 L911.4 175.3 L911.9 175.9 L912.3 177.2 L912.7 175.1 L913.1 175.3 L913.5 175.7 L913.9 176.0 L914.4 175.9 L914.8 176.4 L915.2 180.2 L915.6 179.6 L916.0 183.8 L916.4 175.6 L916.9 175.6 L917.3 180.4 L917.7 174.9 L918.1 178.8 L918.5 176.3 L918.9 175.6 L919.4 177.2 L919.8 178.1 L920.2 175.0 L920.6 179.9 L921.0 179.7 L921.4 175.6 L921.9 178.3 L922.3 175.5 L922.7 177.3 L923.1 177.8 L923.5 172.9 L923.9 175.6 L924.4 177.4 L924.8 180.2 L925.2 260.2 L925.6 181.9 L926.0 175.4 L926.4 180.6 L926.9 177.1 L927.3 177.3 L927.7 180.3 L928.1 175.9 L928.5 176.4 L928.9 181.9 L929.4 182.4 L929.8 180.9 L930.2 247.5 L930.6 181.5 L931.0 178.5 L931.4 177.6 L931.9 184.5 L932.3 175.9 L932.7 185.0 L933.1 183.4 L933.5 177.4 L933.9 179.6 L934.4 176.0 L934.8 175.6 L935.2 175.4 L935.6 182.2 L936.0 175.5 L936.4 176.8 L936.9 177.3 L937.3 182.1 L937.7 187.4 L938.1 175.8 L938.5 178.8 L939.0 178.9 L939.4 179.1 L939.8 179.6 L940.2 215.4 L940.6 181.6 L941.0 177.5 L941.5 180.6 L941.9 186.4 L942.3 175.1 L942.7 175.2 L943.1 182.0 L943.5 184.4 L944.0 177.3 L944.4 175.9 L944.8 177.1 L945.2 181.8 L945.6 177.4 L946.0 174.3 L946.5 179.2 L946.9 181.1 L947.3 178.0 L947.7 183.9 L948.1 175.4 L948.5 178.5 L949.0 174.2 L949.4 179.8 L949.8 175.8 L950.2 178.9 L950.6 178.9 L951.0 181.4 L951.5 178.7 L951.9 178.0 L952.3 179.8 L952.7 175.4 L953.1 176.5 L953.5 175.6 L954.0 179.1 L954.4 184.5 L954.8 178.8 L955.2 179.5 L955.6 179.8 L956.0 176.5 L956.5 179.0 L956.9 174.9 L957.3 176.6 L957.7 175.5 L958.1 177.0 L958.5 178.1 L959.0 177.0 L959.4 181.4 L959.8 225.9 L960.2 178.5 L960.6 179.1 L961.0 178.4 L961.5 180.7 L961.9 178.0 L962.3 180.0 L962.7 176.8 L963.1 176.9 L963.5 177.1 L964.0 176.6 L964.4 185.8 L964.8 218.6 L965.2 178.9 L965.6 177.2 L966.0 180.8 L966.5 176.5 L966.9 181.8 L967.3 179.3 L967.7 182.0 L968.1 178.9 L968.5 175.5 L969.0 181.6 L969.4 181.1 L969.8 218.3 L970.2 180.8 L970.6 175.6 L971.1 178.4 L971.5 178.3 L971.9 175.7 L972.3 181.0 L972.7 178.5 L973.1 177.0 L973.6 174.4 L974.0 183.8 L974.4 180.8 L974.8 216.0 L975.2 181.2 L975.6 175.6 L976.1 177.8 L976.5 176.6 L976.9 177.1 L977.3 178.6 L977.7 178.5 L978.1 175.5 L978.6 177.8 L979.0 176.0 L979.4 179.1 L979.8 175.3 L980.2 181.1 L980.6 177.0 L981.1 175.9 L981.5 178.8 L981.9 179.0 L982.3 179.8 L982.7 175.5 L983.1 178.2 L983.6 183.7 L984.0 180.3 L984.4 181.5 L984.8 248.1 L985.2 181.3 L985.6 176.3 L986.1 178.6 L986.5 175.7 L986.9 180.8 L987.3 179.5 L987.7 177.6 L988.1 176.0 L988.6 186.5 L989.0 176.9 L989.4 179.4 L989.8 199.9 L990.2 181.3 L990.6 176.3 L991.1 177.2 L991.5 182.8 L991.9 185.6 L992.3 176.3 L992.7 176.4 L993.1 182.7 L993.6 184.3 L994.0 179.0 L994.4 217.2 L994.8 181.7 L995.2 175.1 L995.6 174.8 L996.1 177.4 L996.5 175.8 L996.9 176.6 L997.3 178.9 L997.7 184.9 L998.1 178.4 L998.6 181.7 L999.0 180.6 L999.4 180.1 L999.8 181.0 L1000.2 181.7 L1000.7 182.1 L1001.1 178.9 L1001.5 180.6 L1001.9 177.5 L1002.3 179.1 L1002.7 176.4 L1003.2 177.0 L1003.6 184.0 L1004.0 179.4 L1004.4 174.1 L1004.8 177.1 L1005.2 178.2 L1005.7 179.1 L1006.1 192.0 L1006.5 180.8 L1006.9 185.3 L1007.3 178.6 L1007.7 213.5 L1008.2 184.9 L1008.6 187.8 L1009.0 176.6 L1009.4 179.2 L1009.8 222.3 L1010.2 181.3 L1010.7 176.8 L1011.1 178.9 L1011.5 174.4 L1011.9 179.5 L1012.3 174.8 L1012.7 177.9 L1013.2 179.0 L1013.6 176.4 L1014.0 176.4 L1014.4 181.7 L1014.8 175.4 L1015.2 175.3 L1015.7 181.1 L1016.1 209.4 L1016.5 180.1 L1016.9 180.5 L1017.3 176.1 L1017.7 184.4 L1018.2 175.2 L1018.6 176.4 L1019.0 190.5 L1019.4 184.1 L1019.8 174.4 L1020.2 178.2 L1020.7 180.1 L1021.1 213.9 L1021.5 179.2 L1021.9 175.2 L1022.3 175.9 L1022.7 172.5 L1023.2 174.2 L1023.6 176.1 L1024.0 179.5 L1024.4 179.2 L1024.8 180.3 L1025.2 176.1 L1025.7 180.3 L1026.1 244.5 L1026.5 178.2 L1026.9 175.3 L1027.3 181.1 L1027.7 179.7 L1028.2 176.3 L1028.6 176.7 L1029.0 177.2 L1029.4 175.8 L1029.8 185.7 L1030.2 179.7 L1030.7 180.9 L1031.1 236.1 L1031.5 181.8 L1031.9 181.1 L1032.3 177.2 L1032.8 177.0 L1033.2 177.8 L1033.6 178.0 L1034.0 178.6 L1034.4 179.4 L1034.8 175.8 L1035.3 175.5 L1035.7 179.8 L1036.1 213.9 L1036.5 179.9 L1036.9 176.0 L1037.3 174.7 L1037.8 176.0 L1038.2 178.9 L1038.6 174.4 L1039.0 176.5 L1039.4 175.5 L1039.8 181.2 L1040.3 177.4 L1040.7 174.3 L1041.1 176.3 L1041.5 175.4 L1041.9 176.2 L1042.3 177.3 L1042.8 176.3 L1043.2 176.2 L1043.6 174.3 L1044.0 178.2 L1044.4 177.7 L1044.8 173.8 L1045.3 173.8 L1045.7 180.4 L1046.1 177.5 L1046.5 176.1 L1046.9 180.4 L1047.3 174.5 L1047.8 181.0 L1048.2 175.9 L1048.6 181.0 L1049.0 182.1 L1049.4 185.7 L1049.8 188.1 L1050.3 180.3 L1050.7 250.3 L1051.1 179.5 L1051.5 183.4 L1051.9 175.2 L1052.3 177.2 L1052.8 178.8 L1053.2 178.1 L1053.6 182.4 L1054.0 181.1 L1054.4 175.5 L1054.8 177.7 L1055.3 175.0 L1055.7 177.3 L1056.1 185.2 L1056.5 177.2 L1056.9 175.5 L1057.3 177.8 L1057.8 181.6 L1058.2 175.1 L1058.6 180.2 L1059.0 175.5 L1059.4 176.1 L1059.8 177.8 L1060.3 181.7 L1060.7 244.6 L1061.1 179.1 L1061.5 179.5 L1061.9 177.4 L1062.3 178.0 L1062.8 177.2 L1063.2 177.8 L1063.6 175.3 L1064.0 176.5 L1064.4 183.9 L1064.9 173.9 L1065.3 174.7 L1065.7 178.2 L1066.1 176.3 L1066.5 183.8 L1066.9 177.3 L1067.4 174.9 L1067.8 175.4 L1068.2 180.2 L1068.6 176.3 L1069.0 176.2 L1069.4 176.4 L1069.9 178.8 L1070.3 180.0 L1070.7 215.0 L1071.1 187.2 L1071.5 176.9 L1071.9 174.0 L1072.4 178.9 L1072.8 191.1 L1073.2 175.9 L1073.6 178.2 L1074.0 175.7 L1074.4 172.8 L1074.9 181.0 L1075.3 254.4 L1075.7 179.2 L1076.1 175.3 L1076.5 179.4 L1076.9 179.6 L1077.4 177.6 L1077.8 175.0 L1078.2 175.6 L1078.6 178.3 L1079.0 176.6 L1079.4 177.4 L1079.9 178.9 L1080.3 177.9 L1080.7 187.3 L1081.1 177.9 L1081.5 174.1 L1081.9 177.5 L1082.4 176.7 L1082.8 175.9 L1083.2 178.4 L1083.6 177.9 L1084.0 177.0 L1084.4 182.3 L1084.9 178.5 L1085.3 242.3 L1085.7 180.8 L1086.1 175.1 L1086.5 176.6 L1086.9 174.1 L1087.4 178.8 L1087.8 173.9 L1088.2 174.9 L1088.6 183.5 L1089.0 178.9 L1089.4 174.0 L1089.9 174.2 L1090.3 174.8 L1090.7 175.4 L1091.1 175.2 L1091.5 175.4 L1091.9 177.7 L1092.4 177.5 L1092.8 176.8 L1093.2 174.6 L1093.6 173.6 L1094.0 174.9 L1094.5 176.3 L1094.9 185.3 L1095.3 208.4 L1095.7 181.3 L1096.1 177.9 L1096.5 175.6 L1097.0 174.4 L1097.4 176.8 L1097.8 180.1 L1098.2 179.3 L1098.6 177.1 L1099.0 174.1 L1099.5 186.5 L1099.9 178.1 L1100.3 217.6 L1100.7 184.3 L1101.1 176.3 L1101.5 173.5 L1102.0 175.7 L1102.4 176.5 L1102.8 171.8 L1103.2 174.4 L1103.6 179.6 L1104.0 175.9 L1104.5 181.6 L1104.9 173.8 L1105.3 173.4 L1105.7 176.2 L1106.1 178.9 L1106.5 177.7 L1107.0 181.7 L1107.4 175.1 L1107.8 174.6 L1108.2 174.3 L1108.6 172.6 L1109.0 175.8 L1109.5 179.2 L1109.9 177.4 L1110.3 175.4 L1110.7 175.4 L1111.1 172.5 L1111.5 173.4 L1112.0 173.5 L1112.4 176.6 L1112.8 174.6 L1113.2 181.7 L1113.6 177.3 L1114.0 176.8 L1114.5 174.3 L1114.9 176.6 L1115.3 174.0 L1115.7 179.3 L1116.1 175.2 L1116.5 177.2 L1117.0 179.9 L1117.4 177.7 L1117.8 185.1 L1118.2 173.5 L1118.6 172.9 L1119.0 173.6 L1119.5 178.8 L1119.9 183.7 L1120.3 177.3 L1120.7 176.2 L1121.1 179.8 L1121.5 175.4 L1122.0 172.6 L1122.4 172.7 L1122.8 173.6 L1123.2 175.6 L1123.6 174.0 L1124.0 174.4 L1124.5 180.0 L1124.9 177.8 L1125.3 171.8 L1125.7 170.6 L1126.1 174.3 L1126.6 175.1 L1127.0 178.4 L1127.4 174.6 L1127.8 176.9 L1128.2 172.2 L1128.6 175.0 L1129.1 173.2 L1129.5 173.1 L1129.9 174.0 L1130.3 172.4 L1130.7 174.6 L1131.1 175.2 L1131.6 177.6 L1132.0 173.7 L1132.4 175.0 L1132.8 176.8 L1133.2 180.1 L1133.6 174.9 L1134.1 176.1 L1134.5 175.6 L1134.9 175.3 L1135.3 177.0 L1135.7 181.3 L1136.1 216.4 L1136.6 180.0 L1137.0 176.3 L1137.4 176.4 L1137.8 177.9 L1138.2 176.4 L1138.6 174.7 L1139.1 176.7 L1139.5 181.8 L1139.9 172.6 L1140.3 179.3 L1140.7 177.8 L1141.1 176.7 L1141.6 177.2 L1142.0 174.0 L1142.4 175.2 L1142.8 174.4 L1143.2 175.0 L1143.6 174.3 L1144.1 178.9 L1144.5 175.4 L1144.9 177.7 L1145.3 181.1 L1145.7 181.6 L1146.1 224.7 L1146.6 181.4 L1147.0 179.9 L1147.4 173.6 L1147.8 177.9 L1148.2 174.6 L1148.6 176.3 L1149.1 175.9 L1149.5 174.1 L1149.9 175.2 L1150.3 179.5 L1150.7 180.7 L1151.1 216.0 L1151.6 182.5 L1152.0 177.0 L1152.4 175.6 L1152.8 183.4 L1153.2 173.7 L1153.6 176.6 L1154.1 173.9 L1154.5 175.2 L1154.9 177.1 L1155.3 178.4 L1155.7 254.7 L1156.1 178.5 L1156.6 173.9 L1157.0 176.5 L1157.4 176.8 L1157.8 175.9 L1158.2 174.8 L1158.7 186.7 L1159.1 175.8 L1159.5 179.2 L1159.9 180.6 L1160.3 178.5 L1160.7 180.9 L1161.2 219.8 L1161.6 180.7 L1162.0 178.7 L1162.4 176.8 L1162.8 177.7 L1163.2 176.5 L1163.7 177.0 L1164.1 174.6 L1164.5 177.8 L1164.9 178.0 L1165.3 174.2 L1165.7 174.0 L1166.2 152.6 L1166.6 174.0 L1167.0 178.0 L1167.4 174.4 L1167.8 180.9 L1168.2 175.1 L1168.7 175.3 L1169.1 182.8 L1169.5 179.0 L1169.9 178.6 L1170.3 180.8 L1170.7 238.3 L1171.2 181.8 L1171.6 179.0 L1172.0 176.6 L1172.4 177.9 L1172.8 177.7 L1173.2 177.1 L1173.7 175.5 L1174.1 182.7 L1174.5 176.0 L1174.9 176.8 L1175.3 179.5 L1175.7 215.0 L1176.2 179.5 L1176.6 176.1 L1177.0 176.4 L1177.4 176.5 L1177.8 181.3 L1178.2 181.4 L1178.7 181.4 L1179.1 178.8 L1179.5 177.6 L1179.9 177.4 L1180.3 181.4 L1180.7 215.4 L1181.2 181.2 L1181.6 183.6 L1182.0 175.6 L1182.4 178.7 L1182.8 178.7 L1183.2 174.8 L1183.7 176.9 L1184.1 180.1 L1184.5 178.6 L1184.9 177.1 L1185.3 181.9 L1185.7 240.2 L1186.2 178.0 L1186.6 173.5 L1187.0 184.2 L1187.4 175.9 L1187.8 175.8 L1188.3 178.8 L1188.7 178.5 L1189.1 180.3 L1189.5 177.7 L1189.9 177.2 L1190.3 181.8 L1190.8 242.0 L1191.2 179.7 L1191.6 179.8 L1192.0 175.4 L1192.4 177.4 L1192.8 178.0 L1193.3 180.5 L1193.7 174.9 L1194.1 178.6 L1194.5 181.8 L1194.9 177.6 L1195.3 181.2 L1195.8 247.8 L1196.2 178.8 L1196.6 177.9 L1197.0 178.8 L1197.4 174.8 L1197.8 174.7 L1198.3 182.1 L1198.7 178.1 L1199.1 179.0 L1199.5 174.7 L1199.9 175.0 L1200.3 174.0 L1200.8 164.3 L1201.2 174.0 L1201.6 175.5 L1202.0 175.7 L1202.4 189.9 L1202.8 176.6 L1203.3 174.6 L1203.7 178.2 L1204.1 174.8 L1204.5 173.6 L1204.9 180.2 L1205.3 244.2 L1205.8 181.0 L1206.2 178.5 L1206.6 177.4 L1207.0 174.5 L1207.4 176.8 L1207.8 178.6 L1208.3 181.4 L1208.7 185.0 L1209.1 175.4 L1209.5 175.0 L1209.9 183.7 L1210.3 174.2 L1210.8 182.9 L1211.2 179.6 L1211.6 181.7 L1212.0 180.2 L1212.4 178.3 L1212.8 190.3 L1213.3 192.8 L1213.7 176.5 L1214.1 174.8 L1214.5 175.8 L1214.9 185.3 L1215.3 225.2 L1215.8 182.7 L1216.2 179.1 L1216.6 175.3 L1217.0 180.2 L1217.4 174.4 L1217.8 175.9 L1218.3 183.2 L1218.7 174.3 L1219.1 175.9 L1219.5 176.5 L1219.9 176.7 L1220.4 177.9 L1220.8 174.1 L1221.2 184.0 L1221.6 178.1 L1222.0 176.5 L1222.4 176.5 L1222.9 174.5 L1223.3 177.6 L1223.7 178.2 L1224.1 175.7 L1224.5 179.3 L1224.9 175.9 L1225.4 173.6 L1225.8 174.6 L1226.2 175.9 L1226.6 176.4 L1227.0 177.2 L1227.4 175.6 L1227.9 175.9 L1228.3 179.4 L1228.7 173.4 L1229.1 174.8 L1229.5 177.8 L1229.9 178.4 L1230.4 216.0 L1230.8 181.7 L1231.2 176.1 L1231.6 178.2 L1232.0 181.6 L1232.4 178.9 L1232.9 178.8 L1233.3 178.0 L1233.7 182.5 L1234.1 176.7 L1234.5 175.6 L1234.9 178.2 L1235.4 245.6 L1235.8 181.3 L1236.2 178.8 L1236.6 178.2 L1237.0 175.4 L1237.4 175.8 L1237.9 177.7 L1238.3 179.7 L1238.7 176.9 L1239.1 175.8 L1239.5 185.9 L1239.9 243.9 L1240.4 180.5 L1240.8 176.5 L1241.2 177.9 L1241.6 175.2 L1242.0 179.5 L1242.4 179.0 L1242.9 176.3 L1243.3 181.4 L1243.7 174.4 L1244.1 181.5 L1244.5 174.0 L1244.9 176.9 L1245.4 176.5 L1245.8 178.2 L1246.2 175.5 L1246.6 179.3 L1247.0 174.0 L1247.4 174.5 L1247.9 176.8 L1248.3 177.7 L1248.7 175.8 L1249.1 176.6 L1249.5 178.9 L1249.9 248.1 L1250.4 181.2 L1250.8 178.4 L1251.2 177.2 L1251.6 174.9 L1252.0 178.0 L1252.5 174.6 L1252.9 178.3 L1253.3 175.8 L1253.7 175.9 L1254.1 178.9 L1254.5 181.0 L1255.0 215.3 L1255.4 180.6 L1255.8 177.8 L1256.2 177.8 L1256.6 178.6 L1257.0 176.7 L1257.5 178.5 L1257.9 174.2 L1258.3 176.7 L1258.7 174.5 L1259.1 176.0 L1259.5 181.7 L1260.0 242.3 L1260.4 179.7 L1260.8 174.9 L1261.2 175.4 L1261.6 178.4 L1262.0 177.6 L1262.5 172.7 L1262.9 173.9 L1263.3 176.1 L1263.7 180.6 L1264.1 177.1 L1264.5 177.2 L1265.0 175.4 L1265.4 175.8 L1265.8 179.6 L1266.2 174.7 L1266.6 176.7 L1267.0 176.8 L1267.5 173.4 L1267.9 174.0 L1268.3 176.1 L1268.7 177.0 L1269.1 174.2 L1269.5 181.4 L1270.0 255.1 L1270.4 178.9 L1270.8 175.7 L1271.2 182.1 L1271.6 174.3 L1272.0 173.3 L1272.5 175.1 L1272.9 174.0 L1273.3 174.2 L1273.7 174.4 L1274.1 175.3 L1274.5 183.6 L1275.0 175.4 L1275.4 176.9 L1275.8 174.4 L1276.2 178.1 L1276.6 172.5 L1277.0 175.8 L1277.5 176.5 L1277.9 176.0 L1278.3 175.9 L1278.7 179.7 L1279.1 178.6 L1279.5 184.0 L1280.0 175.5 L1280.4 173.7 L1280.8 173.0 L1281.2 174.6 L1281.6 178.7 L1282.1 175.5 L1282.5 176.2 L1282.9 173.7 L1283.3 180.9 L1283.7 179.6 L1284.1 180.9 L1284.6 217.9 L1285.0 178.8 L1285.4 178.3 L1285.8 178.6 L1286.2 175.2 L1286.6 177.9 L1287.1 178.1 L1287.5 174.2 L1287.9 176.4 L1288.3 180.0 L1288.7 184.4 L1289.1 178.1 L1289.6 239.8 L1290.0 180.4 L1290.4 177.9 L1290.8 180.8 L1291.2 175.0 L1291.6 182.6 L1292.1 178.4 L1292.5 175.4 L1292.9 177.0 L1293.3 177.2 L1293.7 187.7 L1294.1 178.6 L1294.6 248.1 L1295.0 182.7 L1295.4 173.0 L1295.8 178.7 L1296.2 175.7 L1296.6 180.7 L1297.1 181.4 L1297.5 181.0 L1297.9 180.8 L1298.3 176.6 L1298.7 179.9 L1299.1 233.6 L1299.6 178.4 L1300.0 173.6 L1300.4 178.5 L1300.8 179.9 L1301.2 180.8 L1301.6 177.8 L1302.1 176.1 L1302.5 173.4 L1302.9 174.1 L1303.3 176.8 L1303.7 177.3 L1304.1 176.3 L1304.6 175.7 L1305.0 177.2 L1305.4 175.3 L1305.8 174.2 L1306.2 177.7 L1306.6 175.0 L1307.1 176.8 L1307.5 175.7 L1307.9 173.8 L1308.3 176.5 L1308.7 181.7 L1309.1 219.1 L1309.6 180.5 L1310.0 177.7 L1310.4 184.3 L1310.8 181.6 L1311.2 182.1 L1311.6 179.4 L1312.1 175.7 L1312.5 176.2 L1312.9 179.6 L1313.3 176.3 L1313.7 174.8 L1314.2 174.2 L1314.6 173.2 L1315.0 172.6 L1315.4 177.9 L1315.8 173.9 L1316.2 173.4 L1316.7 175.1 L1317.1 174.2 L1317.5 180.0 L1317.9 174.6 L1318.3 182.5 L1318.7 180.1 L1319.2 216.4 L1319.6 179.1 L1320.0 173.3 L1320.4 174.9 L1320.8 174.3 L1321.2 173.5 L1321.7 173.4 L1322.1 172.4 L1322.5 173.7 L1322.9 177.2 L1323.3 182.1 L1323.7 246.1 L1324.2 181.6 L1324.6 174.1 L1325.0 179.4 L1325.4 179.4 L1325.8 174.0 L1326.2 175.1 L1326.7 177.0 L1327.1 173.5 L1327.5 174.3 L1327.9 174.4 L1328.3 183.0 L1328.7 179.7 L1329.2 260.2 L1329.6 180.1 L1330.0 171.6 L1330.4 173.5 L1330.8 177.5 L1331.2 173.7 L1331.7 174.3 L1332.1 175.7 L1332.5 173.5 L1332.9 180.3 L1333.3 175.2 L1333.7 174.2 L1334.2 182.8 L1334.6 174.6 L1335.0 182.6 L1335.4 181.0 L1335.8 175.9 L1336.2 176.2 L1336.7 184.6 L1337.1 175.2 L1337.5 175.4 L1337.9 177.1 L1338.3 181.6 L1338.7 176.7 L1339.2 173.8 L1339.6 176.7 L1340.0 180.6 L1340.4 175.2 L1340.8 175.1 L1341.2 175.1 L1341.7 178.3 L1342.1 178.8 L1342.5 178.7 L1342.9 181.7 L1343.3 217.4 L1343.7 179.6 L1344.2 176.6 L1344.6 178.6 L1345.0 178.7 L1345.4 181.2 L1345.8 177.3 L1346.3 174.6 L1346.7 172.7 L1347.1 173.4 L1347.5 177.9 L1347.9 180.2 L1348.3 181.4 L1348.8 240.5 L1349.2 178.3 L1349.6 176.1 L1350.0 174.8 L1350.4 177.8 L1350.8 178.6 L1351.3 175.6 L1351.7 176.2 L1352.1 176.9 L1352.5 175.0 L1352.9 177.3 L1353.3 180.8 L1353.8 213.9 L1354.2 178.5 L1354.6 177.1 L1355.0 180.8 L1355.4 174.6 L1355.8 178.3 L1356.3 180.0 L1356.7 175.4 L1357.1 180.9 L1357.5 183.2 L1357.9 178.9 L1358.3 177.5 L1358.8 174.6 L1359.2 173.5 L1359.6 174.0 L1360.0 186.2 L1360.4 173.1 L1360.8 180.1 L1361.3 174.3 L1361.7 177.2 L1362.1 175.8 L1362.5 174.0 L1362.9 176.8 L1363.3 171.8 L1363.8 173.9 L1364.2 179.9 L1364.6 189.5 L1365.0 178.3 L1365.4 175.6 L1365.8 181.2 L1366.3 181.2 L1366.7 182.0 L1367.1 181.0 L1367.5 184.3 L1367.9 181.5 L1368.3 218.2 L1368.8 181.6 L1369.2 181.8 L1369.6 182.7 L1370.0 178.3 L1370.4 180.7 L1370.8 175.0 L1371.3 175.6 L1371.7 180.4 L1372.1 176.5 L1372.5 181.2 L1372.9 213.8 L1373.3 186.6 L1373.8 182.5 L1374.2 180.1 L1374.6 181.0 L1375.0 182.6 L1375.4 180.2 L1375.9 187.0 L1376.3 177.8 L1376.7 179.0 L1377.1 177.1 L1377.5 175.1 L1377.9 182.0 L1378.4 217.4 L1378.8 187.6 L1379.2 177.1 L1379.6 182.9 L1380.0 182.1 L1380.4 178.3 L1380.9 185.1 L1381.3 175.8 L1381.7 176.3 L1382.1 179.7 L1382.5 181.6 L1382.9 213.8 L1383.4 180.9 L1383.8 184.3 L1384.2 182.6 L1384.6 182.2 L1385.0 175.0 L1385.4 180.0 L1385.9 175.0 L1386.3 181.1 L1386.7 176.0 L1387.1 178.8 L1387.5 177.1 L1387.9 180.4 L1388.4 219.3 L1388.8 182.0 L1389.2 177.7 L1389.6 180.3 L1390.0 176.1 L1390.4 181.2 L1390.9 176.7 L1391.3 180.9 L1391.7 178.7 L1392.1 178.0 L1392.5 181.8 L1392.9 216.9 L1393.4 180.4 L1393.8 177.6 L1394.2 185.9 L1394.6 178.9 L1395.0 179.8 L1395.4 176.5 L1395.9 179.1 L1396.3 184.3 L1396.7 176.4 L1397.1 177.7 L1397.5 177.0 L1397.9 177.4 L1398.4 176.8 L1398.8 178.3 L1399.2 176.0 L1399.6 175.8 L1400.0 181.3 L1400.4 175.4 L1400.9 177.4 L1401.3 177.0 L1401.7 173.9 L1402.1 176.4 L1402.5 178.7 L1402.9 246.1 L1403.4 180.9 L1403.8 178.2 L1404.2 181.5 L1404.6 176.7 L1405.0 179.9 L1405.4 176.0 L1405.9 174.3 L1406.3 176.7 L1406.7 172.8 L1407.1 177.0 L1407.5 180.5 L1408.0 221.1 L1408.4 178.0 L1408.8 178.7 L1409.2 178.6 L1409.6 179.4 L1410.0 177.1 L1410.5 178.8 L1410.9 181.7 L1411.3 177.5 L1411.7 176.0 L1412.1 178.2 L1412.5 179.8 L1413.0 236.4 L1413.4 178.1 L1413.8 179.5 L1414.2 175.1 L1414.6 179.3 L1415.0 189.2 L1415.5 185.2 L1415.9 180.7 L1416.3 175.5 L1416.7 178.3 L1417.1 178.8 L1417.5 178.2 L1418.0 246.1 L1418.4 180.7 L1418.8 180.2 L1419.2 178.5 L1419.6 176.1 L1420.0 175.4 L1420.5 178.2 L1420.9 178.5 L1421.3 177.3 L1421.7 177.3 L1422.1 176.0 L1422.5 174.0 L1423.0 157.3 L1423.4 174.0 L1423.8 175.9 L1424.2 177.9 L1424.6 178.1 L1425.0 180.4 L1425.5 182.4 L1425.9 179.5 L1426.3 189.0 L1426.7 175.8 L1427.1 183.4 L1427.5 263.6 L1428.0 183.1 L1428.4 177.7 L1428.8 177.2 L1429.2 179.6 L1429.6 178.3 L1430.0 177.1 L1430.5 175.7 L1430.9 177.7 L1431.3 190.0 L1431.7 189.9 L1432.1 171.3 L1432.5 177.1 L1433.0 180.0 L1433.4 185.0 L1433.8 201.8 L1434.2 179.1 L1434.6 175.5 L1435.0 175.7 L1435.5 180.6 L1435.9 175.9 L1436.3 176.1 L1436.7 178.9 L1437.1 203.6 L1437.5 180.2 L1438.0 175.9 L1438.4 182.3 L1438.8 175.0 L1439.2 177.4 L1439.6 174.3 L1440.1 180.6 L1440.5 178.0 L1440.9 174.4 L1441.3 183.8 L1441.7 177.4 L1442.1 179.1 L1442.6 233.2 L1443.0 181.7 L1443.4 179.1 L1443.8 176.8 L1444.2 183.7 L1444.6 176.0 L1445.1 176.0 L1445.5 176.1 L1445.9 175.3 L1446.3 176.8 L1446.7 188.7 L1447.1 179.2 L1447.6 241.2 L1448.0 178.9 L1448.4 177.5 L1448.8 174.7 L1449.2 175.5 L1449.6 178.5 L1450.1 179.2 L1450.5 179.6 L1450.9 174.2 L1451.3 173.5 L1451.7 174.3 L1452.1 173.3 L1452.6 174.1 L1453.0 175.4 L1453.4 179.7 L1453.8 180.5 L1454.2 192.0 L1454.6 179.8 L1455.1 177.5 L1455.5 175.0 L1455.9 175.5 L1456.3 173.3 L1456.7 180.4 L1457.1 178.8 L1457.6 201.1 L1458.0 179.5 L1458.4 178.4 L1458.8 178.7 L1459.2 182.1 L1459.6 180.6 L1460.1 182.7 L1460.5 175.1 L1460.9 184.3 L1461.3 178.4 L1461.7 179.2 L1462.1 180.3 L1462.6 173.8 L1463.0 179.9 L1463.4 181.1 L1463.8 187.6 L1464.2 177.0 L1464.6 178.6 L1465.1 184.9 L1465.5 178.9 L1465.9 180.7 L1466.3 178.0 L1466.7 175.0 L1467.1 181.1 L1467.6 177.5 L1468.0 175.1 L1468.4 174.2 L1468.8 179.1 L1469.2 202.2 L1469.7 181.2 L1470.1 172.9 L1470.5 177.3 L1470.9 178.5 L1471.3 177.3 L1471.7 176.4 L1472.2 183.6 L1472.6 183.6 L1473.0 179.5 L1473.4 187.0 L1473.8 176.4 L1474.2 179.1 L1474.7 173.4 L1475.1 175.3 L1475.5 181.5 L1475.9 177.1 L1476.3 180.4 L1476.7 188.5 L1477.2 214.2 L1477.6 180.6 L1478.0 179.5 L1478.4 185.1 L1478.8 182.3 L1479.2 175.4 L1479.7 185.9 L1480.1 186.9 L1480.5 183.2 L1480.9 180.4 L1481.3 178.0 L1481.7 185.0 L1482.2 180.7 L1482.6 227.2 L1483.0 179.7 L1483.4 179.5 L1483.8 174.7 L1484.2 181.6 L1484.7 179.1 L1485.1 174.3 L1485.5 178.3 L1485.9 175.0 L1486.3 179.5 L1486.7 176.2 L1487.2 175.8 L1487.6 180.1 L1488.0 175.3 L1488.4 175.7 L1488.8 182.7 L1489.2 179.5 L1489.7 178.0 L1490.1 182.5 L1490.5 174.8 L1490.9 175.1 L1491.3 178.7 L1491.7 175.5 L1492.2 178.6 L1492.6 182.4 L1493.0 176.2 L1493.4 178.7 L1493.8 224.0 L1494.2 180.3 L1494.7 185.2 L1495.1 187.7 L1495.5 179.3 L1495.9 185.2 L1496.3 181.8 L1496.7 182.2 L1497.2 181.4 L1497.6 175.5 L1498.0 192.1 L1498.4 248.6 L1498.8 182.5 L1499.2 248.6 L1499.7 191.9 L1500.1 182.5 L1500.5 182.2 L1500.9 307.6" fill="none" stroke="#7cb5ec" stroke-width="2" stroke-linejoin="round" stroke-linecap="round"/>
<path d="M1543.0 191.0 H1559.0" stroke="#7cb5ec" stroke-width="2"/>
<circle cx="1551.0" cy="191.0" r="4" fill="#7cb5ec"/>
<text x="1564.0" y="195.3" font-family="Liberation Sans, sans-serif" font-size="12" font-weight="bold" fill="#333333">add</text>
<path d="M1543.0 209.0 H1559.0" stroke="#cccccc" stroke-width="2"/>
<path d="M1547.0 209.0 l4 -4 l4 4 l-4 4 z" fill="#cccccc"/>
<text x="1564.0" y="213.3" font-family="Liberation Sans, sans-serif" font-size="12" font-weight="bold" fill="#cccccc">login</text>
<path d="M1543.0 227.0 H1559.0" stroke="#cccccc" stroke-width="2"/>
<rect x="1547.0" y="223.0" width="8" height="8" fill="#cccccc"/>
<text x="1564.0" y="231.3" font-family="Liberation Sans, sans-serif" font-size="12" font-weight="bold" fill="#cccccc">login1</text>
<g>
<rect x="136.5" y="209.5" width="75" height="53" rx="3" fill="none" stroke="#000" stroke-opacity="0.05" stroke-width="5"/>
<rect x="136.5" y="209.5" width="75" height="53" rx="3" fill="none" stroke="#000" stroke-opacity="0.10" stroke-width="3"/>
<rect x="136.5" y="209.5" width="75" height="53" rx="3" fill="none" stroke="#000" stroke-opacity="0.15" stroke-width="1"/>
<rect x="135.5" y="208.5" width="75" height="53" rx="3" fill="#f9f9f9" fill-opacity="0.85" stroke="#7cb5ec" stroke-width="1"/>
<text x="143.5" y="229.0" font-family="Liberation Sans, sans-serif" font-size="12" fill="#333333" letter-spacing="0.8">00:00:00</text>
<text x="145.0" y="248.0" font-family="Liberation Sans, sans-serif" font-size="12" fill="#333333"><tspan fill="#7cb5ec" letter-spacing="1.0">add:</tspan><tspan dx="2.6" font-weight="bold" fill="#000000" stroke="#000000" stroke-width="0.35" letter-spacing="1.8">0.0</tspan></text>
</g>
<rect x="1513.5" y="152.5" width="87" height="103" rx="3" fill="none" stroke="#ff1a0a" stroke-width="3"/>
</svg>

<div class="abs cj frm" style="left:292px;width:27.37px">开始:</div>
<div class="abs sel" style="left:328px;width:47px">00<svg width="10" height="7" viewBox="0 0 10 7"><path d="M1 1.2 L5 5.2 L9 1.2" fill="none" stroke="#000" stroke-width="1.8"/></svg></div>
<div class="abs col" style="left:376px">:</div>
<div class="abs sel" style="left:385px;width:40px">00<svg width="10" height="7" viewBox="0 0 10 7"><path d="M1 1.2 L5 5.2 L9 1.2" fill="none" stroke="#000" stroke-width="1.8"/></svg></div>
<div class="abs col" style="left:426px">:</div>
<div class="abs sel" style="left:435px;width:40px">00<svg width="10" height="7" viewBox="0 0 10 7"><path d="M1 1.2 L5 5.2 L9 1.2" fill="none" stroke="#000" stroke-width="1.8"/></svg></div>
<div class="abs cj frm" style="left:491px;width:27.37px">截止:</div>
<div class="abs sel" style="left:527px;width:47px">15<svg width="10" height="7" viewBox="0 0 10 7"><path d="M1 1.2 L5 5.2 L9 1.2" fill="none" stroke="#000" stroke-width="1.8"/></svg></div>
<div class="abs col" style="left:575px">:</div>
<div class="abs sel" style="left:584px;width:40px">00<svg width="10" height="7" viewBox="0 0 10 7"><path d="M1 1.2 L5 5.2 L9 1.2" fill="none" stroke="#000" stroke-width="1.8"/></svg></div>
<div class="abs col" style="left:625px">:</div>
<div class="abs sel" style="left:634px;width:40px">00<svg width="10" height="7" viewBox="0 0 10 7"><path d="M1 1.2 L5 5.2 L9 1.2" fill="none" stroke="#000" stroke-width="1.8"/></svg></div>
<div class="abs cj frm" style="left:691px;width:51.37px">间隔时间:</div>
<div class="abs" style="left:755px;top:550px;width:77px;height:22px;border:1px solid #767676;border-radius:2px;font-size:13px;line-height:20px;padding-left:6px;background:#fff">16</div>
<div class="abs frm" style="left:836px">s</div>
<div class="abs btn" style="left:859px;width:64px">重绘图表</div>
<div class="abs btn dis" style="left:940px;width:52px">上一页</div>
<div class="abs btn dis" style="left:1009px;width:52px">下一页</div>
<div class="abs hr" style="left:288px;top:581px;width:1337px"></div>
<div class="abs cj" style="left:288px;top:592px;font-size:13px;line-height:16px;width:85.26px">【图表说明】 :</div>

<table id="tbl" class="abs" cellspacing="2">
<colgroup><col style="width:63px"><col style="width:92px"><col style="width:301px"><col style="width:334px"><col style="width:123px"><col style="width:123px"></colgroup>
<tr class="th"><td>颜色</td><td>名称</td><td>最小值</td><td>最大值</td><td>平均值</td><td>中间值</td></tr>
<tr><td style="background:#7cb5ec"></td><td>add</td><td>【15:00:00】:5.000</td><td>【00:00:01】:811.000</td><td>225.738</td><td>408.000</td></tr>
<tr><td style="background:#434348"></td><td>login</td><td>【15:00:00】:12.000</td><td>【00:00:01】:1260.000</td><td>272.503</td><td>636.000</td></tr>
<tr><td style="background:#90ed7d"></td><td>login1</td><td>【00:00:03】:0.000</td><td>【00:00:01】:15.000</td><td>0.000</td><td>7.500</td></tr>
</table>

<div id="sb" class="abs">
<div id="sbthumb" class="abs"></div>
<svg class="abs" style="left:5px;top:3px" width="7" height="4" viewBox="0 0 7 4"><path d="M0 4 L3.5 0 L7 4 Z" fill="#a3a3a3"/></svg>
<svg class="abs" style="left:5px;top:858px" width="7" height="4" viewBox="0 0 7 4"><path d="M0 0 L3.5 4 L7 0 Z" fill="#505050"/></svg>
</div>
<div class="abs" style="left:0;top:869px;width:1903px;height:1px;background:#d6d7d9"></div>
</body>
</html>
